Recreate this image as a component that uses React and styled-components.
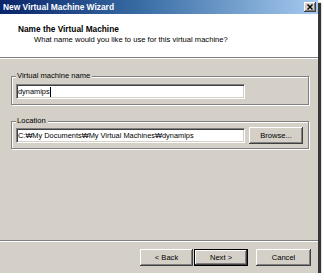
import styled, { createGlobalStyle } from 'styled-components'

const GlobalStyle = createGlobalStyle`
  body {
    margin: 0;
    background: #fff;
    font-family: "Liberation Sans", Arial, "DejaVu Sans", sans-serif;
  }
`

const Window = styled.div`
  width: 318px;
  height: 273px;
  background: #d4d0c8;
  box-shadow: 3px 3px 1px #353535;
  display: flex;
  flex-direction: column;
`

const TitleBar = styled.div`
  height: 14px;
  display: flex;
  align-items: center;
  justify-content: space-between;
  padding: 0 2px 0 3px;
  background: linear-gradient(to right, #0a246a 0%, #3a6ea5 45%, #a6caf0 100%);
`

const TitleText = styled.span`
  color: #fff;
  font-weight: bold;
  font-size: 8.4px;
  line-height: 10px;
`

const CloseButton = styled.div`
  width: 12px;
  height: 10px;
  box-sizing: border-box;
  display: flex;
  align-items: center;
  justify-content: center;
  background: #d4d0c8;
  box-shadow: inset -1px -1px #404040, inset 1px 1px #fff, inset -2px -2px #808080;
`

const Header = styled.div`
  height: 44px;
  box-sizing: border-box;
  padding: 10px 0 0 18px;
  background: #fff;
  border-bottom: 1px solid #808080;
  box-shadow: 0 1px 0 #fff;
`

const Heading = styled.div`
  font-weight: bold;
  font-size: 8.3px;
  line-height: 10px;
  color: #000;
`

const SubHeading = styled.div`
  margin: 1px 0 0 16px;
  font-size: 7.6px;
  line-height: 10px;
  color: #000;
`

const Body = styled.div`
  flex: 1;
  display: flex;
  flex-direction: column;
  padding: 0 9px 0 11px;
`

const Group = styled.fieldset`
  margin: ${({ $top }) => $top}px 0 0;
  padding: 0 5px ${({ $bottom }) => $bottom}px 4px;
  min-width: 0;
  border: 1px solid #808080;
  box-shadow: inset 1px 1px 0 #fff, 1px 1px 0 #fff;
`

const Legend = styled.legend`
  padding: 0 2px 0 1px;
  font-size: 7.6px;
  line-height: 8px;
  color: #000;
  background: #d4d0c8;
`

const Row = styled.div`
  display: flex;
  align-items: center;
  gap: 4px;
  margin-top: ${({ $top }) => $top}px;
`

const Field = styled.div`
  width: 229px;
  height: 15px;
  box-sizing: border-box;
  display: flex;
  align-items: center;
  padding-left: 1px;
  background: #fff;
  border-top: 1px solid #808080;
  border-left: 1px solid #808080;
  border-bottom: 1px solid #fff;
  border-right: 1px solid #fff;
  box-shadow: inset 1px 1px 0 #404040, inset -1px -1px 0 #d4d0c8;
  font-size: 7.4px;
  color: #000;
  white-space: nowrap;
`

const Caret = styled.span`
  width: 1px;
  height: 10px;
  background: #000;
`

const Button = styled.button`
  width: ${({ $w }) => $w}px;
  height: 17px;
  margin: 0 0 0 ${({ $gap }) => $gap || 0}px;
  padding: 0;
  box-sizing: border-box;
  font-family: inherit;
  font-size: 7.6px;
  color: #000;
  background: #d4d0c8;
  border: ${({ $default }) => ($default ? '1px solid #000' : 'none')};
  box-shadow: inset -1px -1px #404040, inset 1px 1px #fff, inset -2px -2px #808080;
`

const Footer = styled.div`
  height: 33px;
  box-sizing: border-box;
  display: flex;
  justify-content: flex-end;
  align-items: flex-start;
  padding: 8px 7px 0 0;
  border-top: 1px solid #808080;
  box-shadow: inset 0 1px 0 #fff;
`

export default function App() {
  return (
    <>
      <GlobalStyle />
      <Window>
        <TitleBar>
          <TitleText>New Virtual Machine Wizard</TitleText>
          <CloseButton>
            <svg width="6" height="6" viewBox="0 0 6 6">
              <path d="M0.5 0.5 L5.5 5.5 M5.5 0.5 L0.5 5.5" stroke="#000" strokeWidth="1.4" />
            </svg>
          </CloseButton>
        </TitleBar>
        <Header>
          <Heading>Name the Virtual Machine</Heading>
          <SubHeading>What name would you like to use for this virtual machine?</SubHeading>
        </Header>
        <Body>
          <Group $top={14} $bottom={5}>
            <Legend>Virtual machine name</Legend>
            <Row $top={4}>
              <Field>
                dynamips
                <Caret />
              </Field>
            </Row>
          </Group>
          <Group $top={12} $bottom={4}>
            <Legend>Location</Legend>
            <Row $top={2}>
              <Field>C:₩My Documents₩My Virtual Machines₩dynamips</Field>
              <Button $w={54}>Browse...</Button>
            </Row>
          </Group>
        </Body>
        <Footer>
          <Button $w={53}>&lt; Back</Button>
          <Button $w={54} $gap={1} $default>Next &gt;</Button>
          <Button $w={55} $gap={8}>Cancel</Button>
        </Footer>
      </Window>
    </>
  )
}
